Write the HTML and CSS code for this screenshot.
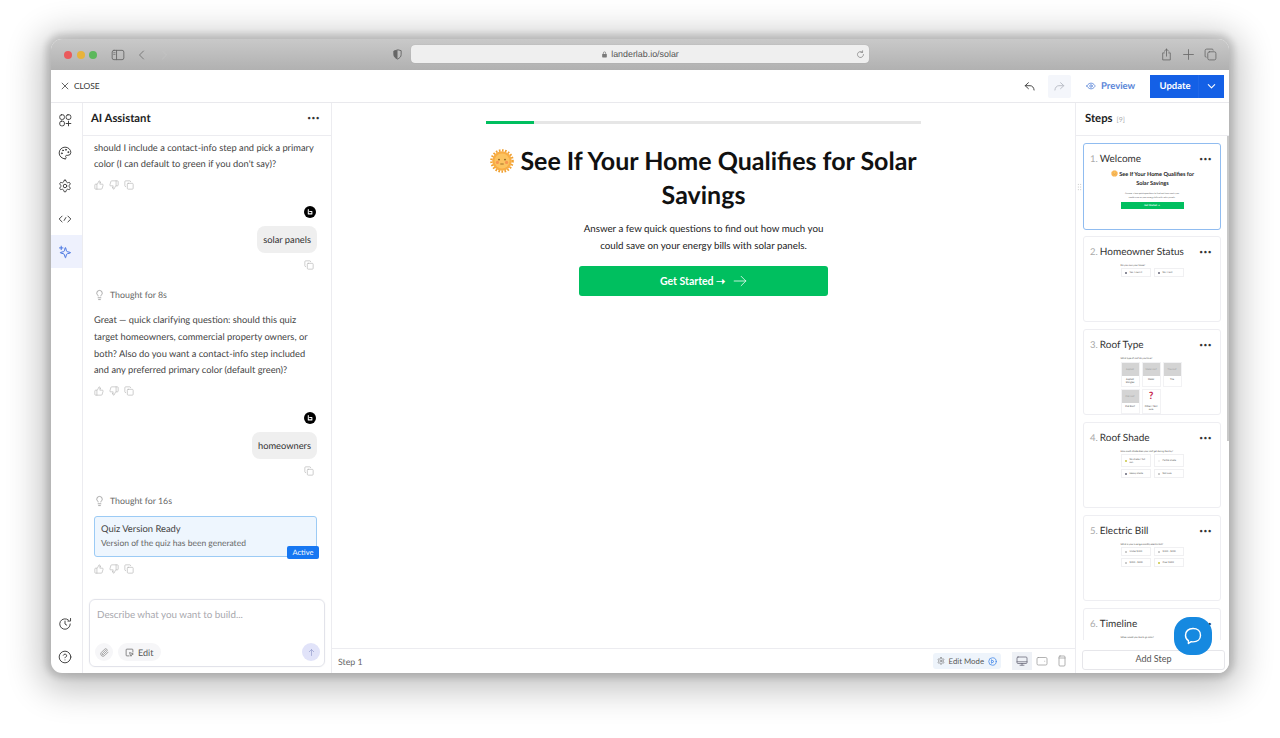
FILE: index.html
```html
<!DOCTYPE html>
<html lang="en">
<head>
    <meta charset="UTF-8">
    <title>LanderLab - Solar quiz</title>
    <meta name="viewport" content="width=device-width, initial-scale=1.0">
    <link rel="stylesheet" href="styles.css">
</head>
<body>
<svg class="sprites" aria-hidden="true">
    <symbol id="i-up" viewBox="0 0 24 24"><path d="M7 10v12"/><path d="M15 5.88 14 10h5.83a2 2 0 0 1 1.92 2.56l-2.33 8A2 2 0 0 1 17.5 22H4a2 2 0 0 1-2-2v-8a2 2 0 0 1 2-2h2.76a2 2 0 0 0 1.79-1.11L12 2a3.13 3.13 0 0 1 3 3.88Z"/></symbol>
    <symbol id="i-down" viewBox="0 0 24 24"><path d="M17 14V2"/><path d="M9 18.12 10 14H4.17a2 2 0 0 1-1.92-2.56l2.33-8A2 2 0 0 1 6.5 2H20a2 2 0 0 1 2 2v8a2 2 0 0 1-2 2h-2.76a2 2 0 0 0-1.79 1.11L12 22a3.13 3.13 0 0 1-3-3.88Z"/></symbol>
    <symbol id="i-copy" viewBox="0 0 24 24"><rect x="8" y="8" width="14" height="14" rx="2"/><path d="M4 16c-1.1 0-2-.9-2-2V4c0-1.1.9-2 2-2h10c1.1 0 2 .9 2 2"/></symbol>
    <symbol id="i-bulb" viewBox="0 0 24 24"><path d="M15 14c.2-1 .7-1.7 1.5-2.5 1-.9 1.5-2.2 1.5-3.5A6 6 0 0 0 6 8c0 1 .2 2.2 1.5 3.5.7.7 1.3 1.5 1.5 2.5"/><path d="M9 18h6"/><path d="M10 22h4"/></symbol>
    <symbol id="i-gear" viewBox="0 0 24 24"><path d="M12.22 2h-.44a2 2 0 0 0-2 2v.18a2 2 0 0 1-1 1.73l-.43.25a2 2 0 0 1-2 0l-.15-.08a2 2 0 0 0-2.73.73l-.22.38a2 2 0 0 0 .73 2.73l.15.1a2 2 0 0 1 1 1.72v.51a2 2 0 0 1-1 1.74l-.15.09a2 2 0 0 0-.73 2.73l.22.38a2 2 0 0 0 2.73.73l.15-.08a2 2 0 0 1 2 0l.43.25a2 2 0 0 1 1 1.73V20a2 2 0 0 0 2 2h.44a2 2 0 0 0 2-2v-.18a2 2 0 0 1 1-1.73l.43-.25a2 2 0 0 1 2 0l.15.08a2 2 0 0 0 2.73-.73l.22-.39a2 2 0 0 0-.73-2.73l-.15-.08a2 2 0 0 1-1-1.74v-.5a2 2 0 0 1 1-1.74l.15-.09a2 2 0 0 0 .73-2.73l-.22-.38a2 2 0 0 0-2.73-.73l-.15.08a2 2 0 0 1-2 0l-.43-.25a2 2 0 0 1-1-1.73V4a2 2 0 0 0-2-2z"/><circle cx="12" cy="12" r="3"/></symbol>
    <symbol id="i-avatar" viewBox="0 0 14 14"><circle cx="7" cy="7" r="7" fill="#000" stroke="none"/><path d="M5 4.200v5h4.200V6.400H6.600" fill="none" stroke="#fff" stroke-width="1.200"/></symbol>
    <symbol id="i-sun" viewBox="0 0 24 24">
        <circle cx="12" cy="12" r="10.600" fill="none" stroke="#f0a030" stroke-width="2.400" stroke-dasharray="1.600 1.500" stroke-linecap="butt"/>
        <circle cx="12" cy="12" r="9.800" fill="#f8ad45" stroke="none"/>
        <circle cx="12" cy="12" r="7.500" fill="#fcc35f" stroke="none"/>
        <circle cx="9" cy="10.600" r=".9" fill="#8a5a1c" stroke="none"/>
        <circle cx="15" cy="10.600" r=".9" fill="#8a5a1c" stroke="none"/>
        <circle cx="7.400" cy="13.400" r="1.600" fill="#f7964f" stroke="none"/>
        <circle cx="16.600" cy="13.400" r="1.600" fill="#f7964f" stroke="none"/>
        <path d="M10.700 15h2.600" stroke="#8a5a1c" stroke-width=".8" fill="none"/>
    </symbol>
</svg>

<div class="window">
    <div class="titlebar">
        <div class="tb-left">
            <span class="light red"></span>
            <span class="light yellow"></span>
            <span class="light green"></span>
            <svg class="tb-icon sidebar-icon" viewBox="0 0 24 24"><rect x="2" y="4" width="20" height="16" rx="3"/><path d="M9.500 4v16"/><path d="M4.500 8h2.500M4.500 11h2.500" stroke-width="1.200"/></svg>
            <svg class="tb-icon back-icon" viewBox="0 0 24 24"><path d="m15 4-8 8 8 8"/></svg>
            <svg class="tb-icon fwd-icon" viewBox="0 0 24 24"><path d="m9 4 8 8-8 8"/></svg>
        </div>
        <svg class="shield" viewBox="0 0 24 24"><path d="M12 2 4 4.500V12c0 5 3.500 8 8 10 4.500-2 8-5 8-10V4.500z" fill="none" stroke="#666" stroke-width="2"/><path d="M12 2 4 4.500V12c0 5 3.500 8 8 10z" fill="#666" stroke="none"/></svg>
        <div class="urlbar">
            <svg class="lock" viewBox="0 0 12 12"><rect x="2" y="5" width="8" height="6" rx="1" fill="#7a7a7a" stroke="none"/><path d="M4 5V3.500a2 2 0 0 1 4 0V5" fill="none" stroke="#7a7a7a" stroke-width="1.200"/></svg>
            <span class="url-text">landerlab.io/solar</span>
            <svg class="reload" viewBox="0 0 24 24"><path d="M20 12a8 8 0 1 1-3-6.200"/><path d="M17.500 2v4.500H13"/></svg>
        </div>
        <div class="tb-right">
            <svg class="tb-icon" viewBox="0 0 24 24"><path d="M8 9H5v13h14V9h-3"/><path d="M12 15V2"/><path d="M8 6l4-4 4 4"/></svg>
            <svg class="tb-icon" viewBox="0 0 24 24"><path d="M12 3v18M3 12h18"/></svg>
            <svg class="tb-icon" viewBox="0 0 24 24"><rect x="7" y="7" width="15" height="15" rx="3"/><path d="M4 17a2 2 0 0 1-2-2V5a3 3 0 0 1 3-3h10a2 2 0 0 1 2 2"/></svg>
        </div>
    </div>

    <div class="topbar">
        <div class="close-link">
            <svg class="ic-close" viewBox="0 0 24 24"><path d="M5 5l14 14M19 5 5 19"/></svg>
            <span>CLOSE</span>
        </div>
        <div class="top-actions">
            <span class="hist-btn"><svg viewBox="0 0 24 24"><path d="M10 5 4 10.500 10 16"/><path d="M4 10.500h9c4 0 7 3 7.500 8"/></svg></span>
            <span class="hist-btn disabled"><svg viewBox="0 0 24 24"><path d="m14 5 6 5.500-6 5.500"/><path d="M20 10.500h-9c-4 0-7 3-7.500 8"/></svg></span>
            <span class="preview">
                <svg viewBox="0 0 24 24"><path d="M2 12s3.500-7 10-7 10 7 10 7-3.500 7-10 7-10-7-10-7z"/><circle cx="12" cy="12" r="3"/></svg>
                Preview
            </span>
            <span class="update">
                <span class="update-label">Update</span>
                <span class="update-caret"><svg viewBox="0 0 24 24"><path d="m5 8 7 7 7-7"/></svg></span>
            </span>
        </div>
    </div>

    <div class="workspace">
        <nav class="rail">
            <span class="rail-item"><svg viewBox="0 0 24 24"><rect x="3" y="3" width="8" height="8" rx="3"/><rect x="14" y="3" width="8" height="8" rx="3"/><rect x="3" y="14" width="8" height="8" rx="3"/><path d="M18 14v8M14 18h8"/></svg></span>
            <span class="rail-item"><svg viewBox="0 0 24 24"><path d="M12 22a1 1 0 0 1 0-20 10 9 0 0 1 10 9 5 5 0 0 1-5 5h-2.250a1.750 1.750 0 0 0-1.400 2.800l.3.400a1.750 1.750 0 0 1-1.400 2.800z"/><circle cx="13.500" cy="6.500" r=".8"/><circle cx="17.500" cy="10.500" r=".8"/><circle cx="6.500" cy="12.500" r=".8"/><circle cx="8.500" cy="7.500" r=".8"/></svg></span>
            <span class="rail-item"><svg><use href="#i-gear"/></svg></span>
            <span class="rail-item"><svg viewBox="0 0 24 24"><path d="M7 7l-5 5 5 5M17 7l5 5-5 5M13.500 9.500l-3 5"/></svg></span>
            <span class="rail-item active"><svg viewBox="0 0 24 24"><path d="M10.900 16.500A2 2 0 0 0 9.500 15l-5-1.300a.5.5 0 0 1 0-1L9.500 11.400a2 2 0 0 0 1.400-1.400l1.300-5a.5.5 0 0 1 1 0l1.300 5a2 2 0 0 0 1.400 1.400l5 1.300a.5.5 0 0 1 0 1l-5 1.300a2 2 0 0 0-1.400 1.400l-1.300 5a.5.5 0 0 1-1 0z"/><path d="M5.500 2v6M2.500 5h6"/></svg></span>
            <span class="rail-spacer"></span>
            <span class="rail-item"><svg viewBox="0 0 24 24"><path d="M21 12a9 9 0 1 1-3-6.700"/><path d="M21.500 2.500V7H17"/><path d="M12 7v5l3 2"/></svg></span>
            <span class="rail-item"><svg viewBox="0 0 24 24"><circle cx="12" cy="12" r="10"/><path d="M9.100 9a3 3 0 0 1 5.800 1c0 2-3 3-3 3"/><path d="M12 17h.01"/></svg></span>
        </nav>

        <aside class="assistant">
            <div class="panel-head">
                <h2>AI Assistant</h2>
                <span class="dots">•••</span>
            </div>
            <div class="chat">
                <p class="msg">A quick check: say, any specifics (yes/no) yet,</p>
                <p class="msg">should I include a contact-info step and pick a primary<br>color (I can default to green if you don't say)?</p>
                <div class="msg-tools">
                    <svg><use href="#i-up"/></svg><svg><use href="#i-down"/></svg><svg><use href="#i-copy"/></svg>
                </div>
                <svg class="avatar"><use href="#i-avatar"/></svg>
                <div class="bubble">solar panels</div>
                <svg class="bubble-copy"><use href="#i-copy"/></svg>
                <div class="thought"><svg><use href="#i-bulb"/></svg>Thought for 8s</div>
                <p class="msg">Great — quick clarifying question: should this quiz<br>target homeowners, commercial property owners, or<br>both? Also do you want a contact-info step included<br>and any preferred primary color (default green)?</p>
                <div class="msg-tools">
                    <svg><use href="#i-up"/></svg><svg><use href="#i-down"/></svg><svg><use href="#i-copy"/></svg>
                </div>
                <svg class="avatar"><use href="#i-avatar"/></svg>
                <div class="bubble">homeowners</div>
                <svg class="bubble-copy"><use href="#i-copy"/></svg>
                <div class="thought"><svg><use href="#i-bulb"/></svg>Thought for 16s</div>
                <div class="version-card">
                    <div class="version-title">Quiz Version Ready</div>
                    <div class="version-sub">Version of the quiz has been generated</div>
                    <span class="version-badge">Active</span>
                </div>
                <div class="msg-tools">
                    <svg><use href="#i-up"/></svg><svg><use href="#i-down"/></svg><svg><use href="#i-copy"/></svg>
                </div>
            </div>
            <div class="composer">
                <div class="placeholder">Describe what you want to build...</div>
                <div class="composer-row">
                    <span class="clip-btn"><svg viewBox="0 0 24 24"><path d="m21.440 11.050-9.190 9.190a6 6 0 0 1-8.490-8.490l8.570-8.570A4 4 0 1 1 18 8.840l-8.590 8.570a2 2 0 0 1-2.830-2.830l8.490-8.480"/></svg></span>
                    <span class="edit-btn"><svg viewBox="0 0 24 24"><path d="M12 12.700a.5.5 0 0 1 .650-.650l9 3.500a.5.5 0 0 1-.030.940l-3.440 1.070a1 1 0 0 0-.660.660l-1.070 3.440a.5.5 0 0 1-.940.030z"/><path d="M21 11V5a2 2 0 0 0-2-2H5a2 2 0 0 0-2 2v14a2 2 0 0 0 2 2h6"/></svg>Edit</span>
                    <span class="send-btn"><svg viewBox="0 0 24 24"><path d="M12 20V4M6 10l6-6 6 6"/></svg></span>
                </div>
            </div>
        </aside>

        <main class="canvas">
            <div class="stage">
                <div class="progress"><div class="progress-fill" style="width: 11%"></div></div>
                <h1><svg class="sun"><use href="#i-sun"/></svg> See If Your Home Qualifies for Solar Savings</h1>
                <p class="lead">Answer a few quick questions to find out how much you<br>could save on your energy bills with solar panels.</p>
                <button class="cta" type="button">Get Started ➝ <svg viewBox="0 0 24 24"><path d="M2 12h20M14 4l8 8-8 8"/></svg></button>
            </div>
            <div class="canvas-foot">
                <span class="step-label">Step 1</span>
                <span class="edit-mode">
                    <svg class="em-gear"><use href="#i-gear"/></svg>
                    Edit Mode
                    <svg class="em-play" viewBox="0 0 24 24"><circle cx="12" cy="12" r="10"/><path d="M10 8l6 4-6 4z"/></svg>
                </span>
                <span class="device on"><svg viewBox="0 0 24 24"><rect x="2" y="4" width="20" height="13" rx="2"/><path d="M2 13.500h20M12 17v3M8 20.500h8"/></svg></span>
                <span class="device"><svg viewBox="0 0 24 24"><rect x="2" y="5" width="20" height="15" rx="2.500"/><path d="M17.500 12.500h.01"/></svg></span>
                <span class="device"><svg viewBox="0 0 24 24"><rect x="6" y="2" width="12" height="20" rx="2"/><path d="M6 6h12"/></svg></span>
            </div>
        </main>

        <aside class="steps">
            <div class="panel-head steps-head">
                <h2>Steps</h2><span class="steps-count">[9]</span>
            </div>
            <div class="steps-list">
                <div class="step current">
                    <div class="step-head"><span class="step-num">1.</span><span class="step-name">Welcome</span><span class="dots">•••</span></div>
                    <div class="mini">
                        <div class="mini-h1"><svg><use href="#i-sun"/></svg> See If Your Home Qualifies for<br>Solar Savings</div>
                        <div class="mini-lead">Answer a few quick questions to find out how much you<br>could save on your energy bills with solar panels.</div>
                        <div class="mini-cta">Get Started ➝</div>
                    </div>
                </div>
                <div class="step">
                    <div class="step-head"><span class="step-num">2.</span><span class="step-name">Homeowner Status</span><span class="dots">•••</span></div>
                    <div class="mini">
                        <div class="mini-q">Do you own your home?</div>
                        <div class="mini-opts">
                            <span class="opt"><i class="dot dark"></i>Yes, I own it</span>
                            <span class="opt"><i class="dot dark"></i>No, I rent</span>
                        </div>
                    </div>
                </div>
                <div class="step">
                    <div class="step-head"><span class="step-num">3.</span><span class="step-name">Roof Type</span><span class="dots">•••</span></div>
                    <div class="mini">
                        <div class="mini-q">What type of roof do you have?</div>
                        <div class="mini-tiles">
                            <span class="tile"><b>Asphalt</b>Asphalt<br>Shingles</span>
                            <span class="tile"><b>Metal roof</b>Metal</span>
                            <span class="tile"><b>Tile roof</b>Tile</span>
                            <span class="tile"><b>Flat roof</b>Flat Roof</span>
                            <span class="tile"><b class="ask">?</b>Other / Not<br>sure</span>
                        </div>
                    </div>
                </div>
                <div class="step">
                    <div class="step-head"><span class="step-num">4.</span><span class="step-name">Roof Shade</span><span class="dots">•••</span></div>
                    <div class="mini">
                        <div class="mini-q">How much shade does your roof get during the day?</div>
                        <div class="mini-opts">
                            <span class="opt tall"><i class="dot sun"></i>No shade / full<br>sun</span>
                            <span class="opt tall"><i class="dot pale"></i>Partial shade</span>
                            <span class="opt"><i class="dot dark"></i>Heavy shade</span>
                            <span class="opt"><i class="dot"></i>Not sure</span>
                        </div>
                    </div>
                </div>
                <div class="step">
                    <div class="step-head"><span class="step-num">5.</span><span class="step-name">Electric Bill</span><span class="dots">•••</span></div>
                    <div class="mini">
                        <div class="mini-q">What is your average monthly electric bill?</div>
                        <div class="mini-opts">
                            <span class="opt"><i class="dot"></i>Under $100</span>
                            <span class="opt"><i class="dot"></i>$100 - $200</span>
                            <span class="opt"><i class="dot"></i>$200 - $300</span>
                            <span class="opt"><i class="dot sun"></i>Over $300</span>
                        </div>
                    </div>
                </div>
                <div class="step">
                    <div class="step-head"><span class="step-num">6.</span><span class="step-name">Timeline</span><span class="dots">•••</span></div>
                    <div class="mini">
                        <div class="mini-q">When would you like to go solar?</div>
                    </div>
                </div>
            </div>
            <div class="steps-foot"><button class="add-step" type="button">Add Step</button></div>
            <div class="drag-handle"></div>
            <div class="scroll-thumb"></div>
            <div class="chat-launcher"><svg viewBox="0 0 24 24"><path d="M12 3c5.500 0 9 3.300 9 8 0 4.700-3.500 8-9 8-.8 0-1.500 0-2.200-.2L6.500 21v-3.500C4 16 3 13.800 3 11c0-4.700 3.500-8 9-8z"/></svg></div>
        </aside>
    </div>
</div>
</body>
</html>
```

FILE: styles.css
```css
* {
    box-sizing: border-box;
}
html, body {
    height: 100%;
    margin: 0;
    overflow: hidden;
}
body {
    font-family: Lato, "Open Sans", sans-serif;
    text-rendering: geometricPrecision;
    background: #fff;
    padding: 39px 51px 65px;
    color: #222;
}
svg {
    fill: none;
    stroke: currentColor;
    stroke-width: 2;
    stroke-linecap: round;
    stroke-linejoin: round;
    flex: none;
}
.sprites {
    display: none;
}
p, h1, h2 {
    margin: 0;
}
button {
    font-family: inherit;
    border: none;
}

/* browser window */
.window {
    height: 100%;
    display: flex;
    flex-direction: column;
    border-radius: 11px;
    overflow: hidden;
    background: #fff;
    box-shadow: 0 0 6px 5px rgba(0,0,0,0.14), 0 6px 34px 11px rgba(0,0,0,0.24);
}
.titlebar {
    height: 31px;
    flex: none;
    display: flex;
    align-items: center;
    padding: 0 12px 0 13px;
    background: linear-gradient(#c9c9c9, #b1b1b1);
}
.tb-left {
    display: flex;
    align-items: center;
    width: 328px;
}
.light {
    width: 8px;
    height: 8px;
    border-radius: 50%;
    margin-right: 4.5px;
}
.light.red { background: #ea5a5c; }
.light.yellow { background: #e8b33c; }
.light.green { background: #5cb85c; }
.tb-icon {
    width: 14px;
    height: 14px;
    color: #6b6b6b;
    stroke-width: 1.6;
}
.sidebar-icon {
    margin-left: 9px;
}
.back-icon {
    margin-left: 11px;
    width: 12px;
}
.fwd-icon {
    margin-left: 10px;
    width: 12px;
    color: #c4c4c4;
}
.shield {
    width: 11px;
    height: 11px;
    margin-right: 8px;
}
.urlbar {
    width: 458px;
    height: 18px;
    margin-top: -1px;
    position: relative;
    display: flex;
    align-items: center;
    justify-content: center;
    gap: 3px;
    border-radius: 4px;
    background: #efefef;
    box-shadow: 0 0 1px rgba(0,0,0,0.2);
}
.lock {
    width: 7px;
    height: 7px;
}
.url-text {
    font-family: "Liberation Sans", sans-serif;
    font-size: 8.9px;
    color: #555;
}
.reload {
    position: absolute;
    right: 4px;
    width: 9px;
    height: 9px;
    color: #777;
    stroke-width: 1.8;
}
.tb-right {
    margin-left: auto;
    display: flex;
    gap: 9px;
}
.tb-right .tb-icon {
    width: 13px;
    height: 13px;
}

/* app toolbar */
.topbar {
    height: 33px;
    flex: none;
    display: flex;
    align-items: center;
    justify-content: space-between;
    padding-right: 5px;
    border-bottom: 1px solid #e9e9ed;
}
.close-link {
    display: flex;
    align-items: center;
    gap: 4px;
    padding-left: 9px;
    font-size: 8.4px;
    color: #333;
}
.ic-close {
    width: 10px;
    height: 10px;
    stroke-width: 1.8;
}
.top-actions {
    display: flex;
    align-items: center;
}
.hist-btn {
    width: 23px;
    height: 23px;
    display: flex;
    align-items: center;
    justify-content: center;
    margin-right: 7px;
    border-radius: 2px;
    color: #444;
}
.hist-btn svg {
    width: 13px;
    height: 13px;
    stroke-width: 1.8;
}
.hist-btn.disabled {
    margin-right: 0;
    background: #f4f6fb;
    color: #b9bdc6;
}
.preview {
    display: flex;
    align-items: center;
    gap: 5px;
    width: 79px;
    padding-left: 15px;
    font-size: 9.5px;
    font-weight: 700;
    color: #5a86d8;
}
.preview svg {
    width: 10px;
    height: 10px;
}
.update {
    display: flex;
    width: 74px;
    height: 23px;
    align-items: center;
    background: #1460e6;
    color: #fff;
    font-size: 9.5px;
    font-weight: 700;
}
.update-label {
    width: 48px;
    text-align: center;
    padding-left: 2px;
}
.update-caret {
    flex: 1;
    height: 100%;
    display: flex;
    align-items: center;
    justify-content: center;
    border-left: 1px solid #1f67e8;
}
.update-caret svg {
    width: 11px;
    height: 11px;
    stroke-width: 2.4;
}

.workspace {
    flex: 1;
    min-height: 0;
    display: flex;
}

/* left rail */
.rail {
    width: 32px;
    flex: none;
    display: flex;
    flex-direction: column;
    border-right: 1px solid #ececf0;
    color: #3a3a3a;
}
.rail-item {
    height: 33px;
    display: flex;
    align-items: center;
    justify-content: center;
    padding-right: 3px;
}
.rail-item svg {
    width: 14px;
    height: 14px;
    stroke-width: 1.6;
}
.rail-item.active {
    background: #eef1fd;
    color: #3f6fe0;
}
.rail-spacer {
    flex: 1;
}

/* assistant panel */
.assistant {
    width: 249px;
    flex: none;
    display: flex;
    flex-direction: column;
    border-right: 1px solid #ececf0;
}
.panel-head {
    height: 33px;
    flex: none;
    display: flex;
    align-items: center;
    justify-content: space-between;
    padding: 0 11px 2px 8px;
    border-bottom: 1px solid #ececf0;
}
.panel-head h2 {
    font-size: 11.3px;
    font-weight: 700;
    color: #222;
}
.dots {
    font-size: 6.5px;
    letter-spacing: 0.5px;
    color: #333;
}
.chat {
    flex: 1;
    min-height: 0;
    overflow: hidden;
    display: flex;
    flex-direction: column;
    justify-content: flex-end;
    padding: 0 14px 25px 11px;
}
.msg {
    flex: none;
    font-size: 9.3px;
    line-height: 16.7px;
    color: #444;
}
.thought + .msg {
    margin-top: 2px;
}
.msg-tools {
    flex: none;
    display: flex;
    gap: 5px;
    margin-top: 7px;
    height: 10px;
    color: #b6b6b6;
}
.msg-tools svg {
    width: 10px;
    height: 10px;
    stroke-width: 1.6;
}
.avatar {
    flex: none;
    align-self: flex-end;
    width: 12px;
    height: 12px;
    margin: 16px 1px 0 0;
}
.bubble {
    flex: none;
    align-self: flex-end;
    height: 27px;
    padding: 0 6px;
    margin-top: 8px;
    display: flex;
    align-items: center;
    border-radius: 8px;
    background: #efefef;
    font-size: 9.3px;
    color: #333;
}
.bubble-copy {
    flex: none;
    align-self: flex-end;
    width: 10px;
    height: 10px;
    margin: 7px 3px 0 0;
    color: #b6b6b6;
    stroke-width: 1.6;
}
.thought {
    flex: none;
    display: flex;
    align-items: center;
    gap: 5px;
    margin: 16px 0 7px;
    height: 17px;
    font-size: 8.8px;
    color: #666;
}
.thought svg {
    width: 11px;
    height: 12px;
    color: #888;
    stroke-width: 1.5;
}
.version-card {
    flex: none;
    position: relative;
    height: 41px;
    padding: 6px 6px;
    border: 1px solid #9ccbf5;
    border-radius: 3px;
    background: #eef6fe;
}
.version-title {
    font-size: 9.4px;
    line-height: 13px;
    color: #444;
}
.version-sub {
    font-size: 8.5px;
    line-height: 14px;
    color: #666;
}
.version-badge {
    position: absolute;
    right: -3px;
    bottom: -3px;
    width: 32px;
    height: 13px;
    display: flex;
    align-items: center;
    justify-content: center;
    border-radius: 2px;
    background: #1677f2;
    color: #fff;
    font-size: 7.5px;
}
.composer {
    flex: none;
    height: 68px;
    margin: 0 6px 6px;
    padding: 9px 4px 5px 7px;
    display: flex;
    flex-direction: column;
    justify-content: space-between;
    border: 1px solid #e2e3ea;
    border-radius: 6px;
    box-shadow: 0 0 2px rgba(0,0,0,0.06);
}
.placeholder {
    font-size: 9.8px;
    line-height: 12px;
    color: #a8a8ae;
}
.composer-row {
    display: flex;
    align-items: center;
    gap: 5px;
    margin-left: -2px;
}
.clip-btn, .send-btn {
    width: 18px;
    height: 18px;
    display: flex;
    align-items: center;
    justify-content: center;
    border-radius: 50%;
    background: #f6f6f8;
    color: #888;
}
.clip-btn svg, .send-btn svg {
    width: 9px;
    height: 9px;
}
.edit-btn {
    height: 18px;
    padding: 0 8px 0 7px;
    display: flex;
    align-items: center;
    gap: 4px;
    border-radius: 9px;
    background: #f6f6f8;
    font-size: 9px;
    color: #555;
}
.edit-btn svg {
    width: 9px;
    height: 9px;
    stroke-width: 1.8;
}
.send-btn {
    margin-left: auto;
    background: #e1e3f9;
    color: #9aa1cf;
}

/* centre canvas */
.canvas {
    flex: 1;
    min-width: 0;
    display: flex;
    flex-direction: column;
    border-right: 1px solid #ececf0;
}
.stage {
    flex: 1;
    display: flex;
    flex-direction: column;
    align-items: center;
    padding-top: 18px;
}
.progress {
    width: 435px;
    height: 3px;
    background: #e6e6e6;
}
.progress-fill {
    height: 100%;
    background: #00bf5f;
}
h1 {
    width: 435px;
    margin-top: 20px;
    font-size: 25px;
    line-height: 34px;
    font-weight: 700;
    text-align: center;
    color: #111;
}
.sun {
    width: 24px;
    height: 24px;
    vertical-align: -3px;
}
.lead {
    margin-top: 9px;
    font-size: 9.75px;
    line-height: 16.5px;
    text-align: center;
    color: #222;
}
.cta {
    width: 249px;
    height: 30px;
    margin-top: 12px;
    display: flex;
    align-items: center;
    justify-content: center;
    gap: 4px;
    border-radius: 3px;
    background: #00bf5f;
    color: #fff;
    font-size: 10.5px;
    font-weight: 700;
}
.cta svg {
    width: 14px;
    height: 14px;
    margin-left: 4px;
    stroke-width: 1.3;
}
.canvas-foot {
    height: 25px;
    flex: none;
    display: flex;
    align-items: center;
    padding: 0 3px 0 6px;
    border-top: 1px solid #ececf0;
    font-size: 8.8px;
    color: #666;
}
.step-label {
    margin-right: auto;
}
.edit-mode {
    height: 16px;
    padding: 0 4px;
    display: flex;
    align-items: center;
    gap: 4px;
    margin-right: 11px;
    border-radius: 3px;
    background: #eef4fb;
    color: #555;
    font-size: 7.8px;
}
.em-gear {
    width: 8px;
    height: 8px;
    color: #777;
}
.em-play {
    width: 9px;
    height: 9px;
    color: #3f86e8;
}
.device {
    width: 20px;
    height: 18px;
    display: flex;
    align-items: center;
    justify-content: center;
    color: #999;
}
.device.on {
    background: #eef1f6;
    color: #667;
}
.device svg {
    width: 12px;
    height: 12px;
    stroke-width: 1.5;
}

/* steps panel */
.steps {
    width: 153px;
    flex: none;
    position: relative;
    display: flex;
    flex-direction: column;
    min-height: 0;
}
.steps-head {
    justify-content: flex-start;
    gap: 4px;
    padding-left: 9px;
}
.steps-count {
    font-size: 7px;
    color: #aaa;
    margin-top: 3px;
}
.steps-list {
    flex: 1;
    min-height: 0;
    overflow: hidden;
    display: flex;
    flex-direction: column;
    gap: 7px;
    padding: 7px 8px 0 7px;
}
.step {
    height: 86px;
    flex: none;
    overflow: hidden;
    padding: 8px 8px 0 6px;
    border: 1px solid #eeeef2;
    border-radius: 3px;
    background: #fff;
}
.step.current {
    border-color: #90bcf0;
    height: 87px;
    margin-bottom: -1px;
}
.step-head {
    display: flex;
    align-items: center;
    height: 14px;
    font-size: 10px;
}
.step-num {
    color: #aaa;
    margin-right: 2px;
    font-size: 9.5px;
}
.step-name {
    color: #333;
}
.step-head .dots {
    margin-left: auto;
}

/* thumbnails */
.mini {
    width: 63px;
    margin: 1px auto 0;
    position: relative;
    left: 1px;
}
.mini-h1 {
    width: 100px;
    margin: 4px 0 0 -18px;
    font-size: 5.6px;
    line-height: 8.8px;
    font-weight: 700;
    text-align: center;
    color: #222;
}
.mini-h1 svg {
    width: 7px;
    height: 7px;
    vertical-align: -1px;
}
.mini-lead {
    margin-top: 3px;
    font-size: 2.2px;
    line-height: 4px;
    text-align: center;
    white-space: nowrap;
    color: #555;
}
.mini-cta {
    height: 7px;
    margin-top: 2px;
    display: flex;
    align-items: center;
    justify-content: center;
    background: #00bf5f;
    color: #fff;
    font-size: 2.5px;
    font-weight: 700;
}
.mini-q {
    font-size: 2.3px;
    line-height: 3px;
    margin-top: 6px;
    white-space: nowrap;
    color: #444;
}
.mini-opts {
    display: grid;
    grid-template-columns: 1fr 1fr;
    gap: 2px 3px;
}
.opt {
    min-height: 9px;
    padding: 0 2px 0 3px;
    display: flex;
    align-items: center;
    gap: 3px;
    border: 1px solid #f0f0f2;
    font-size: 2.4px;
    line-height: 3px;
    color: #555;
    white-space: nowrap;
}
.opt.tall {
    min-height: 13px;
}
.dot {
    width: 2px;
    height: 2px;
    flex: none;
    border-radius: 50%;
    background: #bbb;
}
.dot.dark { background: #667; }
.dot.sun { background: #c8c440; }
.dot.pale { background: #eee; }
.mini-tiles {
    display: grid;
    grid-template-columns: repeat(3, 19px);
    gap: 2px;
    margin-top: 1px;
}
.tile {
    height: 25px;
    border: 1px solid #f2f2f4;
    font-size: 2.4px;
    line-height: 3.2px;
    text-align: center;
    color: #444;
}
.tile b {
    height: 13px;
    display: flex;
    align-items: center;
    justify-content: center;
    margin-bottom: 2px;
    background: #d4d4d4;
    font-weight: 400;
    color: #999;
}
.tile b.ask {
    background: #fff;
    color: #c4204a;
    font-size: 10px;
    font-weight: 700;
}
.steps-foot {
    height: 33px;
    flex: none;
    padding: 7px 4px 6px 6px;
    background: #fff;
}
.add-step {
    width: 100%;
    height: 20px;
    padding: 0 0 3px;
    border: 1px solid #e6e6ea;
    border-radius: 3px;
    background: #fff;
    font-size: 9px;
    color: #555;
}
.drag-handle {
    position: absolute;
    left: 1px;
    top: 80px;
    width: 5px;
    height: 8px;
    background-image: radial-gradient(#b5b5b5 0.7px, transparent 0.8px);
    background-size: 2.5px 2.7px;
}
.scroll-thumb {
    position: absolute;
    right: 0;
    top: 33px;
    width: 2px;
    height: 305px;
    background: #c9c9c9;
}
.chat-launcher {
    position: absolute;
    left: 98px;
    top: 514px;
    width: 38px;
    height: 38px;
    display: flex;
    align-items: center;
    justify-content: center;
    border-radius: 16px;
    background: #1689e0;
    color: #fff;
}
.chat-launcher svg {
    width: 20px;
    height: 20px;
    stroke-width: 1.7;
}
```
